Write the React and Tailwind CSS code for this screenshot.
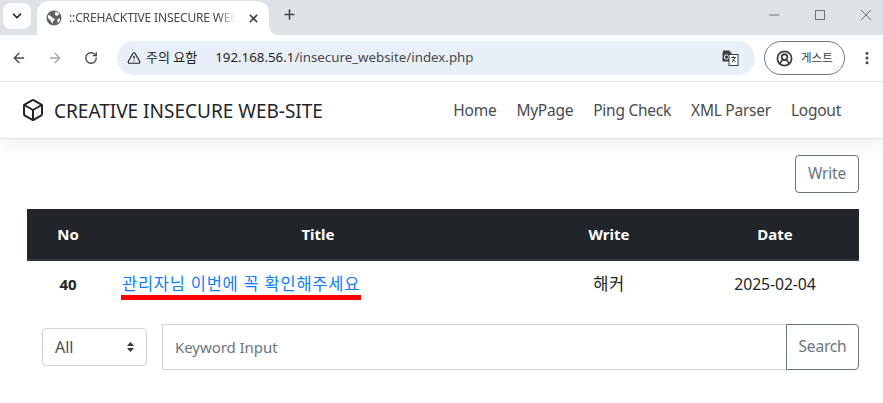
import { ArrowLeft, ArrowRight, RotateCw, Plus, X, ChevronDown, TriangleAlert, EllipsisVertical, CircleUserRound, Box } from 'lucide-react'

const navItems = ['Home', 'MyPage', 'Ping Check', 'XML Parser', 'Logout']

function GlobeIcon() {
  return (
    <svg width="16" height="16" viewBox="0 0 16 16">
      <circle cx="8" cy="8" r="7.5" fill="#5f6368" />
      <path d="M2 5l3 1 1.5 2 2 .5v2L7 11v3L4 10 2 8zM9.5 1.5l3.5 1.5-.5 2-2 1-1.5-1.5zM11.5 9l2.5-.5-.5 3L11.5 13z" fill="#fff" />
    </svg>
  )
}

function TranslateIcon() {
  return (
    <svg width="17" height="16" viewBox="0 0 17 16">
      <path d="M1 0.5h6.5l1.5 3h-8z" fill="#3c4043" />
      <rect x="0.5" y="2.5" width="9" height="9" rx="0.5" fill="#3c4043" />
      <circle cx="4.5" cy="7" r="2.2" fill="none" stroke="#fff" strokeWidth="1" />
      <rect x="7" y="4.5" width="9" height="11" fill="#fff" stroke="#3c4043" strokeWidth="1" />
      <path d="M9 7.5h5M11.5 6.5v1M13 8l-3 4M10.5 9l3 3" fill="none" stroke="#3c4043" strokeWidth="1" />
    </svg>
  )
}

function WindowControls() {
  return (
    <div className="ml-auto flex items-center gap-[36px] pr-[12px] pt-[10px]">
      <svg width="10" height="10" viewBox="0 0 10 10"><path d="M0 5h10" stroke="#6e7176" strokeWidth="1" /></svg>
      <svg width="10" height="10" viewBox="0 0 10 10"><rect x="0.5" y="0.5" width="9" height="9" fill="none" stroke="#6e7176" strokeWidth="1" /></svg>
      <svg width="10" height="10" viewBox="0 0 10 10"><path d="M0 0l10 10M10 0L0 10" stroke="#6e7176" strokeWidth="1" /></svg>
    </div>
  )
}

function BrowserChrome() {
  return (
    <div className="font-['Noto_Sans','Noto_Sans_CJK_KR',sans-serif]">
      <div className="flex h-[35px] items-start bg-[#dee1e6]">
        <div className="ml-[3px] mt-[3px] flex h-[26px] w-[28px] items-center justify-center rounded-lg bg-white">
          <ChevronDown size={14} strokeWidth={3} color="#202124" />
        </div>
        <div className="relative ml-[6px] mt-[1px] flex h-[34px] w-[232px] items-center rounded-t-xl bg-white pl-[9px] pr-[9px]">
          <GlobeIcon />
          <span className="ml-[7px] w-[166px] overflow-hidden whitespace-nowrap text-[12px] tracking-[-0.15px] text-[#45474a] [mask-image:linear-gradient(to_right,black_90%,transparent)]">::CREHACKTIVE INSECURE WEB</span>
          <X size={13} strokeWidth={3} color="#3c4043" className="ml-auto" />
          <span className="absolute bottom-0 right-[-10px] h-[10px] w-[10px] bg-[radial-gradient(circle_at_top_right,transparent_10px,white_10.5px)]" />
        </div>
        <Plus size={15} strokeWidth={2.5} color="#3c4043" className="ml-[13px] mt-[7px]" />
        <WindowControls />
      </div>
      <div className="flex h-[47px] items-center border-b border-[#e3e3e3] bg-white">
        <ArrowLeft size={16} strokeWidth={2} color="#474747" className="ml-[11px]" />
        <ArrowRight size={16} strokeWidth={2} color="#a8a8a8" className="ml-[20px]" />
        <RotateCw size={14} strokeWidth={2.25} color="#474747" className="ml-[21px]" />
        <div className="ml-[19px] flex h-[34px] w-[638px] items-center rounded-full bg-[#e9eff8] pl-[10px] pr-[16px]">
          <TriangleAlert size={14} strokeWidth={2} color="#202124" />
          <span className="ml-[5px] text-[13px] text-[#202124]">주의 요함</span>
          <span className="ml-[18px] text-[13.3px] text-[#45474a]"><span className="text-[#1f1f1f]">192.168.56.1</span>/insecure_website/index.php</span>
          <span className="ml-auto flex"><TranslateIcon /></span>
        </div>
        <div className="ml-[9px] flex h-[34px] w-[81px] items-center rounded-full border border-[#747775] pl-[11px]">
          <CircleUserRound size={17} strokeWidth={2.5} color="#3c4043" />
          <span className="ml-[8px] text-[11.5px] text-[#3c4043]">게스트</span>
        </div>
        <EllipsisVertical size={16} strokeWidth={2.5} color="#474747" className="ml-[14px]" />
      </div>
    </div>
  )
}

export default function App() {
  return (
    <div className="h-[403px] w-[883px] overflow-hidden bg-white font-['Noto_Sans','Noto_Sans_CJK_KR',sans-serif] text-[#212529]">
      <BrowserChrome />
      <nav className="flex h-[57px] items-center border-b border-[#dedfe0] pl-[21px] pr-[42px] shadow-[0_8px_16px_rgba(0,0,0,0.05)]">
        <Box size={24} strokeWidth={2} color="#212529" />
        <span className="ml-[9px] pt-[2px] text-[19px]">CREATIVE INSECURE WEB-SITE</span>
        <ul className="ml-auto flex gap-[20px] pt-[2px] text-[15.5px] tracking-[-0.25px] text-[#484b4f]">
          {navItems.map((item) => (
            <li key={item}>{item}</li>
          ))}
        </ul>
      </nav>

      <main className="pl-[27px] pr-[24px]">
        <div className="flex justify-end pt-[16px]">
          <button className="h-[38px] w-[64px] rounded border border-[#6c757d] text-[15.5px] tracking-[-0.2px] text-[#6c757d]">Write</button>
        </div>

        <table className="mt-[16px] w-[832px] table-fixed border-collapse text-[15px]">
          <thead>
            <tr className="h-[51px] border-b-2 border-[#32383e] bg-[#212529] text-white">
              <th className="w-[82px] font-bold">No</th>
              <th className="w-[418px] font-bold">Title</th>
              <th className="w-[164px] font-bold">Write</th>
              <th className="w-[168px] font-bold">Date</th>
            </tr>
          </thead>
          <tbody>
            <tr className="h-[50px]">
              <td className="pb-[2px] text-center font-bold">40</td>
              <td className="pb-[2px] pl-[13px]">
                <a href="#" className="relative inline-block text-[16.5px] tracking-[0.75px] text-[#0d7dfd]">
                  관리자님 이번에 꼭 확인해주세요
                  <span className="absolute bottom-[-3px] left-[-1px] right-[-1px] h-[5px] bg-[#ff0000]" />
                </a>
              </td>
              <td className="pb-[2px] text-center text-[16.5px] tracking-[0.5px]">해커</td>
              <td className="pb-[2px] text-center text-[15.8px] tracking-[-0.1px]">2025-02-04</td>
            </tr>
          </tbody>
        </table>

        <div className="mt-[14px] flex items-center pl-[15px]">
          <div className="flex h-[38px] w-[105px] items-center justify-between rounded border border-[#ced4da] pl-[12px] pr-[11px] text-[16px] text-[#495057]">
            All
            <svg width="9" height="10" viewBox="0 0 9 10"><path d="M4.5 0L8 4H1zM4.5 10L1 6h7z" fill="#343a40" /></svg>
          </div>
          <div className="ml-[15px] flex h-[46px] w-[625px] items-center border border-[#ced4da] pl-[12px] text-[15px] tracking-[-0.05px] text-[#6c757d]">Keyword Input</div>
          <button className="ml-[-1px] h-[46px] w-[73px] rounded-r border border-[#6c757d] text-[15.5px] tracking-[-0.2px] text-[#6c757d]">Search</button>
        </div>
      </main>
    </div>
  )
}
